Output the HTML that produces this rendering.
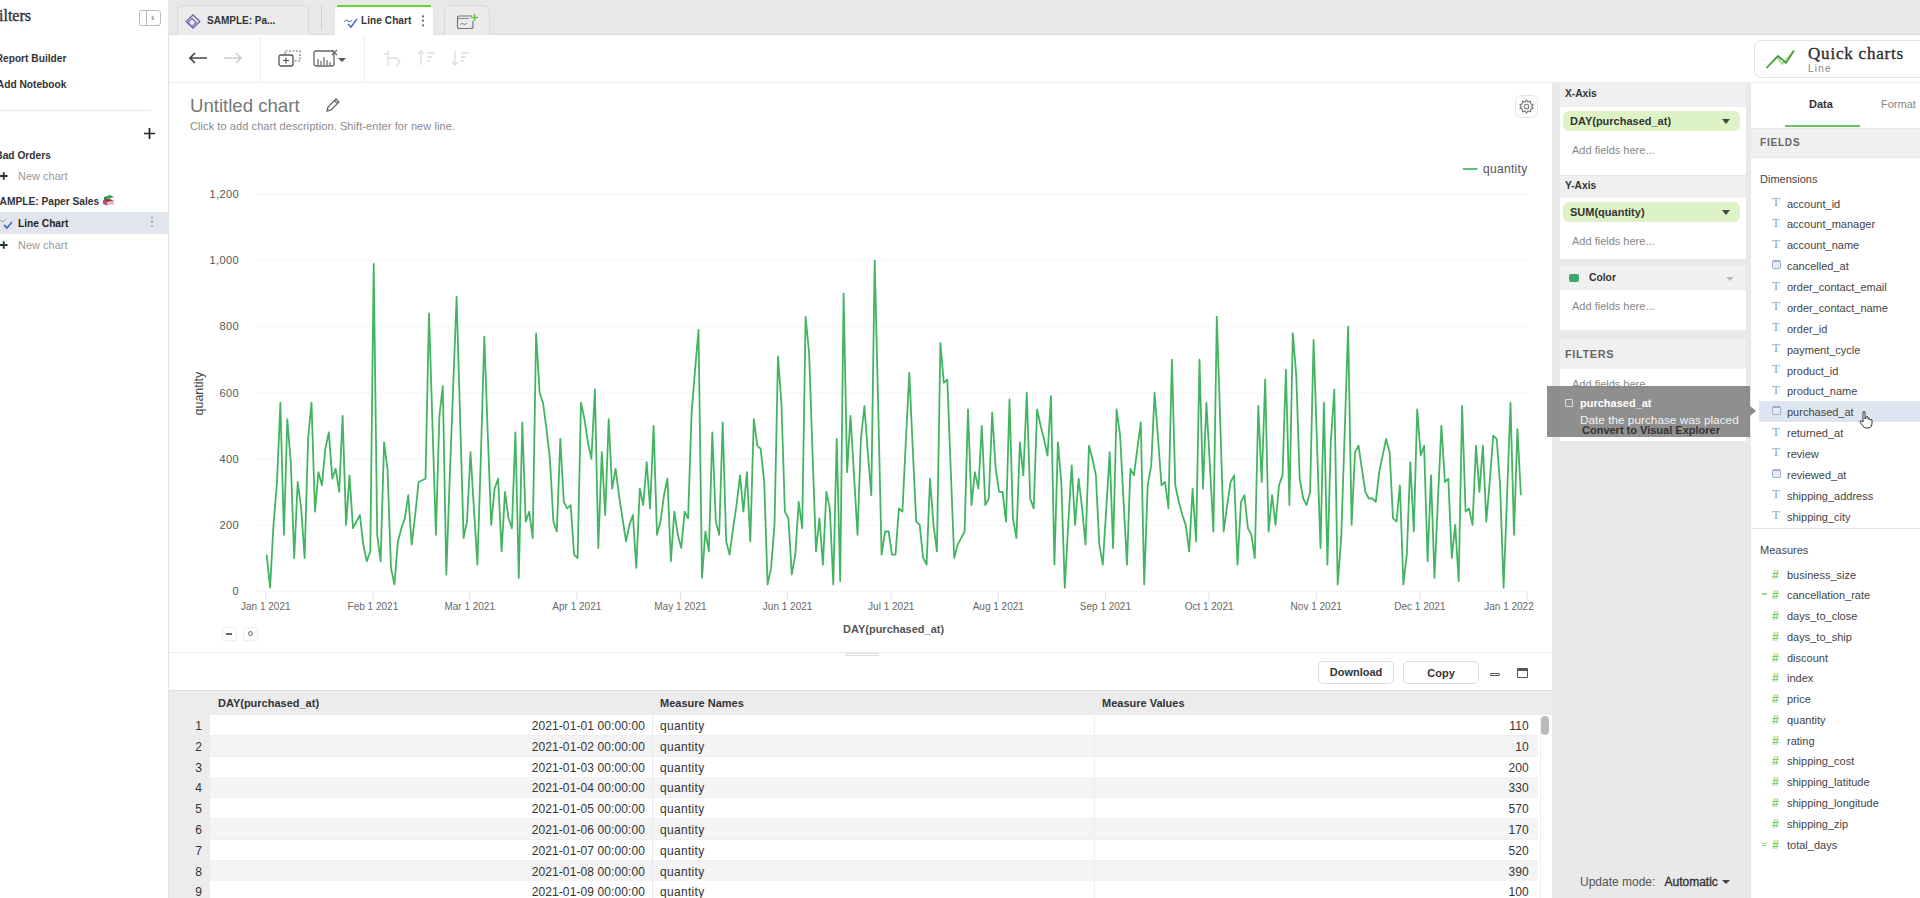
<!DOCTYPE html>
<html><head><meta charset="utf-8">
<style>
*{box-sizing:border-box;margin:0;padding:0}
html,body{width:1920px;height:898px;overflow:hidden;background:#fff;font-family:"Liberation Sans",sans-serif;color:#333}
.a{position:absolute;white-space:nowrap}
.b{font-weight:bold}
</style></head><body>

<div class="a" style="left:168px;top:0;width:1px;height:898px;background:#e4e4e4"></div>
<div class="a" style="right:1889px;top:6.5px;font-family:'Liberation Serif',serif;font-size:16px;color:#333;-webkit-text-stroke:0.4px #333">Filters</div>
<div class="a" style="left:139px;top:10px;width:22px;height:16px;border:1px solid #bbb;border-radius:3px"></div>
<div class="a" style="left:146px;top:10px;width:1px;height:16px;background:#bbb"></div>
<div class="a" style="left:151px;top:11px;font-size:11px;color:#666">&#8249;</div>
<div class="a b" style="right:1853.6px;top:53px;font-size:10.2px;color:#333">Report Builder</div>
<div class="a b" style="right:1853.6px;top:79px;font-size:10.2px;color:#333">Add Notebook</div>
<div class="a" style="left:0;top:110px;width:151px;height:1px;background:#e8e8ef"></div>
<svg class="a" style="left:144px;top:128px" width="11" height="11"><path d="M0 5.5 H11 M5.5 0 V11" stroke="#222" stroke-width="1.7"/></svg>
<div class="a b" style="right:1869.2px;top:149.5px;font-size:10.2px;color:#333">Bad Orders</div>
<svg class="a" style="left:0;top:172px" width="8" height="8"><path d="M0 4 H7.5 M3.75 0.3 V7.7" stroke="#1f3a24" stroke-width="1.8"/></svg>
<div class="a" style="left:18px;top:170px;font-size:11px;color:#999">New chart</div>
<div class="a b" style="right:1820.8px;top:195.5px;font-size:10.2px;color:#333">SAMPLE: Paper Sales</div>
<svg class="a" style="left:102px;top:194px" width="13" height="12"><path d="M1 6 L8 5 L12 7 L5 8 Z" fill="#9a2a3a"/><path d="M1 6 V10 L5 11.5 V8 Z" fill="#c04a5a"/><path d="M5 8 L12 7 V10.5 L5 11.5 Z" fill="#e0c0c8"/><path d="M2 3 L8 1 L12 3 L6 5 Z" fill="#3aa050"/><path d="M2 3 V5.5 L6 7 V5 Z" fill="#2a7040"/></svg>
<div class="a" style="left:0;top:212px;width:168px;height:22px;background:#e1e6ee"></div>
<svg class="a" style="left:0;top:215px" width="16" height="16"><path d="M0 5 L3 7 L6 4" stroke="#999" stroke-width="1" fill="none"/><path d="M4 10 L7 13 L12 7" stroke="#4a6fd0" stroke-width="1.8" fill="none"/></svg>
<div class="a b" style="left:18px;top:217.5px;font-size:10.2px;color:#222">Line Chart</div>
<div class="a" style="left:151px;top:215px;width:2px;height:14px;background:radial-gradient(circle,#777 0.8px,transparent 1px) 0 0/2px 4.5px"></div>
<svg class="a" style="left:0;top:241px" width="8" height="8"><path d="M0 4 H7.5 M3.75 0.3 V7.7" stroke="#1f3a24" stroke-width="1.8"/></svg>
<div class="a" style="left:18px;top:239px;font-size:11px;color:#999">New chart</div>

<div class="a" style="left:169px;top:0;width:1751px;height:35px;background:#e8e8e8;border-bottom:1px solid #dcdcdc"></div>
<div class="a" style="left:177px;top:5px;width:132px;height:30px;background:#ebebec;border:1px solid #d9d9d9;border-bottom:none;border-radius:6px 6px 0 0"></div>
<svg class="a" style="left:185px;top:14px" width="16" height="16"><path d="M8 1 L14.8 7.5 L8 14 L1.2 7.5 Z" stroke="#7a5a9e" stroke-width="1.3" fill="none"/><path d="M7 4.5 L11.2 8.5 L7 12.5 L2.8 8.5 Z" stroke="#6a6ac0" stroke-width="1.2" fill="none"/></svg>
<div class="a b" style="left:207px;top:15px;font-size:10px;color:#333">SAMPLE: Pa...</div>
<div class="a" style="left:321px;top:6px;width:1px;height:24px;background:#cfcfcf"></div>
<div class="a" style="left:335px;top:5px;width:98px;height:31px;background:#fff;border-radius:6px 6px 0 0"></div>
<div class="a" style="left:337px;top:5px;width:94px;height:2px;background:#6ad13a"></div>
<svg class="a" style="left:343px;top:15px" width="16" height="14"><path d="M1 7 Q3 4 5 6 T9 5" stroke="#888" stroke-width="1.2" fill="none"/><path d="M5 9 L8 12 L14 4" stroke="#4a6fd0" stroke-width="1.6" fill="none"/></svg>
<div class="a b" style="left:361px;top:15px;font-size:10px;letter-spacing:0.1px;color:#333">Line Chart</div>
<div class="a" style="left:422px;top:14px;width:2px;height:13px;background:radial-gradient(circle,#444 0.9px,transparent 1.1px) 0 0/2px 4.5px"></div>
<div class="a" style="left:444px;top:5px;width:46px;height:30px;background:#ebebec;border:1px solid #d9d9d9;border-bottom:none;border-radius:6px 6px 0 0"></div>
<svg class="a" style="left:455px;top:12px" width="24" height="18"><path d="M17 4 H4.5 Q2.5 4 2.5 6 V14.5 Q2.5 16.5 4.5 16.5 H16 Q18 16.5 18 14.5 V9" stroke="#777" stroke-width="1.2" fill="none"/><path d="M2.5 6.5 H14" stroke="#888" stroke-width="1"/><path d="M5.5 12.5 Q7 10.5 8.5 12 T12 11" stroke="#888" stroke-width="1" fill="none"/><path d="M19.5 2 V9 M16 5.5 H23" stroke="#6cc840" stroke-width="1.7"/></svg>

<div class="a" style="left:169px;top:82px;width:1751px;height:1px;background:#ececec"></div>
<div class="a" style="left:260px;top:36px;width:1px;height:46px;background:#eee"></div>
<div class="a" style="left:364px;top:36px;width:1px;height:46px;background:#eee"></div>
<svg class="a" style="left:188px;top:51px" width="22" height="14"><path d="M2 7 H19 M7 2 L2 7 L7 12" stroke="#444" stroke-width="1.7" fill="none"/></svg>
<svg class="a" style="left:222px;top:51px" width="22" height="14"><path d="M2 7 H19 M14 2 L19 7 L14 12" stroke="#ccc" stroke-width="1.5" fill="none"/></svg>
<svg class="a" style="left:277px;top:48px" width="26" height="20"><rect x="2" y="7" width="14" height="11" rx="2" stroke="#555" stroke-width="1.3" fill="#fff"/><path d="M9 9.5 V15.5 M6 12.5 H12" stroke="#555" stroke-width="1.2"/><path d="M8 6 V3 H23 V13 H17" stroke="#777" stroke-width="1.2" stroke-dasharray="2 1.5" fill="none"/></svg>
<svg class="a" style="left:312px;top:48px" width="40" height="20"><rect x="2" y="3" width="20" height="15" rx="2" stroke="#666" stroke-width="1.3" fill="none"/><path d="M6 17 V11 M9 17 V13 M12 17 V9 M15 17 V12 M18 17 V14" stroke="#666" stroke-width="1.2"/><path d="M20 2 L25 7 M25 2 L20 7" stroke="#666" stroke-width="1.1"/><path d="M26 10 L34 10 L30 14 Z" fill="#555"/></svg>
<svg class="a" style="left:380px;top:48px" width="24" height="20"><path d="M8 2 V18 M4 6 H8 M8 10 H16 L20 14 L16 18" stroke="#ddd" stroke-width="1.3" fill="none"/></svg>
<svg class="a" style="left:416px;top:49px" width="22" height="18"><path d="M5 2 V16 M2 5 L5 2 L8 5 M11 4 H19 M11 8 H16 M11 12 H14" stroke="#ddd" stroke-width="1.3" fill="none"/></svg>
<svg class="a" style="left:450px;top:49px" width="22" height="18"><path d="M5 2 V16 M2 13 L5 16 L8 13 M11 4 H19 M11 8 H16 M11 12 H14" stroke="#ddd" stroke-width="1.3" fill="none"/></svg>

<div class="a" style="left:190px;top:95px;font-size:18.6px;color:#777">Untitled chart</div>
<svg class="a" style="left:325px;top:97px" width="16" height="16"><path d="M2 14 L3 10 L11 2 L14 5 L6 13 Z M9.5 3.5 L12.5 6.5" stroke="#666" stroke-width="1.3" fill="none"/></svg>
<div class="a" style="left:190px;top:120px;font-size:11px;letter-spacing:0.08px;color:#8a8a8a">Click to add chart description. Shift-enter for new line.</div>
<div class="a" style="left:1515px;top:95px;width:23px;height:23px;border:1px solid #e4e4e4;border-radius:6px"></div>
<svg class="a" style="left:1518px;top:98px" width="17" height="17"><g fill="none" stroke="#777" stroke-width="1.1"><circle cx="8.5" cy="8.5" r="2.3"/><path d="M8.5 2 L10 4 L12.5 3.3 L12.8 5.8 L15 7 L13.6 8.5 L15 10 L12.8 11.2 L12.5 13.7 L10 13 L8.5 15 L7 13 L4.5 13.7 L4.2 11.2 L2 10 L3.4 8.5 L2 7 L4.2 5.8 L4.5 3.3 L7 4 Z"/></g></svg>

<svg class="a" style="left:0;top:0" width="1552" height="660">
<line x1="256" y1="591.7" x2="1528" y2="591.7" stroke="#e6e6ee" stroke-width="1" stroke-dasharray="1.5 2.5"/>
<text x="239" y="595.2" text-anchor="end" font-size="11" letter-spacing="0.4" fill="#555" font-family="Liberation Sans">0</text>
<line x1="256" y1="525.5" x2="1528" y2="525.5" stroke="#e6e6ee" stroke-width="1" stroke-dasharray="1.5 2.5"/>
<text x="239" y="529.0" text-anchor="end" font-size="11" letter-spacing="0.4" fill="#555" font-family="Liberation Sans">200</text>
<line x1="256" y1="459.2" x2="1528" y2="459.2" stroke="#e6e6ee" stroke-width="1" stroke-dasharray="1.5 2.5"/>
<text x="239" y="462.7" text-anchor="end" font-size="11" letter-spacing="0.4" fill="#555" font-family="Liberation Sans">400</text>
<line x1="256" y1="393.0" x2="1528" y2="393.0" stroke="#e6e6ee" stroke-width="1" stroke-dasharray="1.5 2.5"/>
<text x="239" y="396.5" text-anchor="end" font-size="11" letter-spacing="0.4" fill="#555" font-family="Liberation Sans">600</text>
<line x1="256" y1="326.7" x2="1528" y2="326.7" stroke="#e6e6ee" stroke-width="1" stroke-dasharray="1.5 2.5"/>
<text x="239" y="330.2" text-anchor="end" font-size="11" letter-spacing="0.4" fill="#555" font-family="Liberation Sans">800</text>
<line x1="256" y1="260.5" x2="1528" y2="260.5" stroke="#e6e6ee" stroke-width="1" stroke-dasharray="1.5 2.5"/>
<text x="239" y="264.0" text-anchor="end" font-size="11" letter-spacing="0.4" fill="#555" font-family="Liberation Sans">1,000</text>
<line x1="256" y1="194.3" x2="1528" y2="194.3" stroke="#e6e6ee" stroke-width="1" stroke-dasharray="1.5 2.5"/>
<text x="239" y="197.8" text-anchor="end" font-size="11" letter-spacing="0.4" fill="#555" font-family="Liberation Sans">1,200</text>
<line x1="265.8" y1="592" x2="265.8" y2="600" stroke="#e4e4ea" stroke-width="1"/>
<text x="265.8" y="609.5" text-anchor="middle" font-size="10" fill="#666" font-family="Liberation Sans">Jan 1 2021</text>
<line x1="372.9" y1="592" x2="372.9" y2="600" stroke="#e4e4ea" stroke-width="1"/>
<text x="372.9" y="609.5" text-anchor="middle" font-size="10" fill="#666" font-family="Liberation Sans">Feb 1 2021</text>
<line x1="469.7" y1="592" x2="469.7" y2="600" stroke="#e4e4ea" stroke-width="1"/>
<text x="469.7" y="609.5" text-anchor="middle" font-size="10" fill="#666" font-family="Liberation Sans">Mar 1 2021</text>
<line x1="576.8" y1="592" x2="576.8" y2="600" stroke="#e4e4ea" stroke-width="1"/>
<text x="576.8" y="609.5" text-anchor="middle" font-size="10" fill="#666" font-family="Liberation Sans">Apr 1 2021</text>
<line x1="680.4" y1="592" x2="680.4" y2="600" stroke="#e4e4ea" stroke-width="1"/>
<text x="680.4" y="609.5" text-anchor="middle" font-size="10" fill="#666" font-family="Liberation Sans">May 1 2021</text>
<line x1="787.6" y1="592" x2="787.6" y2="600" stroke="#e4e4ea" stroke-width="1"/>
<text x="787.6" y="609.5" text-anchor="middle" font-size="10" fill="#666" font-family="Liberation Sans">Jun 1 2021</text>
<line x1="891.2" y1="592" x2="891.2" y2="600" stroke="#e4e4ea" stroke-width="1"/>
<text x="891.2" y="609.5" text-anchor="middle" font-size="10" fill="#666" font-family="Liberation Sans">Jul 1 2021</text>
<line x1="998.3" y1="592" x2="998.3" y2="600" stroke="#e4e4ea" stroke-width="1"/>
<text x="998.3" y="609.5" text-anchor="middle" font-size="10" fill="#666" font-family="Liberation Sans">Aug 1 2021</text>
<line x1="1105.4" y1="592" x2="1105.4" y2="600" stroke="#e4e4ea" stroke-width="1"/>
<text x="1105.4" y="609.5" text-anchor="middle" font-size="10" fill="#666" font-family="Liberation Sans">Sep 1 2021</text>
<line x1="1209.1" y1="592" x2="1209.1" y2="600" stroke="#e4e4ea" stroke-width="1"/>
<text x="1209.1" y="609.5" text-anchor="middle" font-size="10" fill="#666" font-family="Liberation Sans">Oct 1 2021</text>
<line x1="1316.2" y1="592" x2="1316.2" y2="600" stroke="#e4e4ea" stroke-width="1"/>
<text x="1316.2" y="609.5" text-anchor="middle" font-size="10" fill="#666" font-family="Liberation Sans">Nov 1 2021</text>
<line x1="1419.9" y1="592" x2="1419.9" y2="600" stroke="#e4e4ea" stroke-width="1"/>
<text x="1419.9" y="609.5" text-anchor="middle" font-size="10" fill="#666" font-family="Liberation Sans">Dec 1 2021</text>
<line x1="1527.0" y1="592" x2="1527.0" y2="600" stroke="#e4e4ea" stroke-width="1"/>
<text x="1509.0" y="609.5" text-anchor="middle" font-size="10" fill="#666" font-family="Liberation Sans">Jan 1 2022</text>
<text x="893.6" y="632.5" text-anchor="middle" font-size="11" font-weight="bold" fill="#555" font-family="Liberation Sans">DAY(purchased_at)</text>
<text transform="translate(203,393.6) rotate(-90)" text-anchor="middle" font-size="12.5" fill="#444" font-family="Liberation Sans">quantity</text>
<path d="M266.6,554.7 L270.1,587.7 L273.5,524.9 L277.0,482.0 L280.4,402.7 L283.9,534.8 L287.3,419.2 L290.8,462.1 L294.2,558.0 L297.7,482.0 L301.2,508.4 L304.6,558.0 L308.1,439.0 L311.5,402.7 L315.0,511.7 L318.4,472.1 L321.9,485.3 L325.3,448.9 L328.8,432.4 L332.3,478.7 L335.7,468.8 L339.2,491.9 L342.6,415.9 L346.1,524.9 L349.5,475.4 L353.0,528.2 L356.4,521.6 L359.9,515.0 L363.3,544.7 L366.8,561.3 L370.3,551.4 L373.7,263.9 L377.2,534.8 L380.6,561.3 L384.1,442.3 L387.5,468.8 L391.0,567.9 L394.4,584.4 L397.9,541.4 L401.4,528.2 L404.8,518.3 L408.3,495.2 L411.7,544.7 L415.2,515.0 L418.6,482.0 L422.1,480.3 L425.5,478.7 L429.0,313.5 L432.5,425.8 L435.9,534.8 L439.4,415.9 L442.8,386.2 L446.3,574.5 L449.7,478.7 L453.2,386.2 L456.6,296.9 L460.1,417.5 L463.6,538.1 L467.0,521.6 L470.5,452.2 L473.9,508.4 L477.4,564.6 L480.8,458.8 L484.3,336.6 L487.7,432.4 L491.2,524.9 L494.6,488.6 L498.1,478.7 L501.6,551.4 L505.0,491.9 L508.5,518.3 L511.9,528.2 L515.4,432.4 L518.8,577.8 L522.3,422.5 L525.7,521.6 L529.2,511.7 L532.7,538.1 L536.1,333.3 L539.6,392.8 L543.0,402.7 L546.5,429.1 L549.9,458.8 L553.4,521.6 L556.8,531.5 L560.3,439.0 L563.8,501.8 L567.2,508.4 L570.7,505.1 L574.1,554.7 L577.6,558.0 L581.0,402.7 L584.5,419.2 L587.9,442.3 L591.4,458.8 L594.9,389.5 L598.3,548.0 L601.8,452.2 L605.2,515.0 L608.7,419.2 L612.1,488.6 L615.6,468.8 L619.0,495.2 L622.5,518.3 L626.0,541.4 L629.4,524.9 L632.9,515.0 L636.3,567.9 L639.8,488.6 L643.2,505.1 L646.7,462.1 L650.1,508.4 L653.6,425.8 L657.0,534.8 L660.5,521.6 L664.0,495.2 L667.4,478.7 L670.9,561.3 L674.3,511.7 L677.8,534.8 L681.2,548.0 L684.7,511.7 L688.1,518.3 L691.6,412.6 L695.1,369.6 L698.5,330.0 L702.0,577.8 L705.4,531.5 L708.9,551.4 L712.3,432.4 L715.8,521.6 L719.2,534.8 L722.7,422.5 L726.2,541.4 L729.6,554.7 L733.1,528.2 L736.5,505.1 L740.0,475.4 L743.4,511.7 L746.9,472.1 L750.3,541.4 L753.8,419.2 L757.3,445.6 L760.7,448.9 L764.2,482.0 L767.6,584.4 L771.1,567.9 L774.5,524.9 L778.0,356.4 L781.4,402.7 L784.9,511.7 L788.4,518.3 L791.8,574.5 L795.3,554.7 L798.7,501.8 L802.2,528.2 L805.6,316.8 L809.1,353.1 L812.5,452.2 L816.0,551.4 L819.4,518.3 L822.9,564.6 L826.4,491.9 L829.8,508.4 L833.3,584.4 L836.7,439.0 L840.2,581.1 L843.6,293.6 L847.1,472.1 L850.5,415.9 L854.0,475.4 L857.5,534.8 L860.9,439.0 L864.4,406.0 L867.8,452.2 L871.3,495.2 L874.7,260.6 L878.2,407.6 L881.6,554.7 L885.1,531.5 L888.6,531.5 L892.0,554.7 L895.5,554.7 L898.9,508.4 L902.4,511.7 L905.8,442.3 L909.3,372.9 L912.7,447.3 L916.2,521.6 L919.7,524.9 L923.1,558.0 L926.6,564.6 L930.0,478.7 L933.5,524.9 L936.9,551.4 L940.4,343.2 L943.8,382.8 L947.3,379.5 L950.7,468.8 L954.2,558.0 L957.7,544.7 L961.1,538.1 L964.6,531.5 L968.0,409.3 L971.5,505.1 L974.9,472.1 L978.4,488.6 L981.8,425.8 L985.3,505.1 L988.8,498.5 L992.2,412.6 L995.7,468.8 L999.1,491.9 L1002.6,491.9 L1006.0,521.6 L1009.5,399.4 L1012.9,518.3 L1016.4,538.1 L1019.9,442.3 L1023.3,475.4 L1026.8,392.8 L1030.2,498.5 L1033.7,508.4 L1037.1,409.3 L1040.6,425.8 L1044.0,439.0 L1047.5,455.5 L1051.0,396.1 L1054.4,564.6 L1057.9,442.3 L1061.3,482.0 L1064.8,587.7 L1068.2,524.9 L1071.7,465.4 L1075.1,524.9 L1078.6,478.7 L1082.1,508.4 L1085.5,544.7 L1089.0,445.6 L1092.4,458.8 L1095.9,475.4 L1099.3,544.7 L1102.8,564.6 L1106.2,510.1 L1109.7,452.2 L1113.1,548.0 L1116.6,409.3 L1120.1,435.7 L1123.5,500.1 L1127.0,564.6 L1130.4,468.8 L1133.9,475.4 L1137.3,448.9 L1140.8,422.5 L1144.2,584.4 L1147.7,485.3 L1151.2,465.4 L1154.6,392.8 L1158.1,439.0 L1161.5,485.3 L1165.0,482.0 L1168.4,508.4 L1171.9,359.7 L1175.3,485.3 L1178.8,501.8 L1182.3,515.0 L1185.7,524.9 L1189.2,551.4 L1192.6,488.6 L1196.1,541.4 L1199.5,359.7 L1203.0,488.6 L1206.4,402.7 L1209.9,465.4 L1213.4,531.5 L1216.8,316.8 L1220.3,424.1 L1223.7,531.5 L1227.2,505.1 L1230.6,482.0 L1234.1,475.4 L1237.5,564.6 L1241.0,501.8 L1244.4,495.2 L1247.9,528.2 L1251.4,534.8 L1254.8,558.0 L1258.3,406.0 L1261.7,482.0 L1265.2,379.5 L1268.6,531.5 L1272.1,495.2 L1275.5,524.9 L1279.0,485.3 L1282.5,475.4 L1285.9,369.6 L1289.4,505.1 L1292.8,333.3 L1296.3,376.2 L1299.7,478.7 L1303.2,498.5 L1306.6,505.1 L1310.1,491.9 L1313.6,339.9 L1317.0,444.0 L1320.5,548.0 L1323.9,402.7 L1327.4,564.6 L1330.8,442.3 L1334.3,389.5 L1337.7,584.4 L1341.2,538.1 L1344.7,432.4 L1348.1,326.7 L1351.6,524.9 L1355.0,452.2 L1358.5,445.6 L1361.9,468.8 L1365.4,491.9 L1368.8,498.5 L1372.3,498.5 L1375.8,501.8 L1379.2,472.1 L1382.7,455.5 L1386.1,439.0 L1389.6,452.2 L1393.0,518.3 L1396.5,521.6 L1399.9,485.3 L1403.4,584.4 L1406.8,554.7 L1410.3,462.1 L1413.8,531.5 L1417.2,409.3 L1420.7,455.5 L1424.1,445.6 L1427.6,561.3 L1431.0,475.4 L1434.5,577.8 L1437.9,500.1 L1441.4,425.8 L1444.9,482.0 L1448.3,478.7 L1451.8,558.0 L1455.2,524.9 L1458.7,581.1 L1462.1,406.0 L1465.6,511.7 L1469.0,508.4 L1472.5,524.9 L1476.0,445.6 L1479.4,491.9 L1482.9,445.6 L1486.3,521.6 L1489.8,481.0 L1493.2,435.7 L1496.7,439.0 L1500.1,485.3 L1503.6,587.7 L1507.1,495.2 L1510.5,402.7 L1514.0,534.8 L1517.4,429.1 L1520.9,495.2" stroke="#43b562" stroke-width="1.8" fill="none" stroke-linejoin="round"/>
<line x1="1463" y1="169" x2="1477.5" y2="169" stroke="#5cc27a" stroke-width="2"/>
<text x="1483" y="173" font-size="12" letter-spacing="0.3" fill="#555" font-family="Liberation Sans">quantity</text>
</svg>
<div class="a" style="left:222px;top:627px;width:15px;height:14px;border:1px solid #eee;border-radius:2px"></div>
<div class="a" style="left:226px;top:633px;width:6px;height:2px;background:#666"></div>
<div class="a" style="left:243px;top:627px;width:15px;height:14px;border:1px solid #eee;border-radius:2px"></div>
<div class="a" style="left:248px;top:631px;width:5px;height:5px;border:1.3px solid #666;border-radius:50%"></div>
<div class="a" style="left:169px;top:652px;width:1383px;height:1px;background:#eee"></div>
<div class="a" style="left:845px;top:653px;width:34px;height:3px;border-top:1px solid #ddd;border-bottom:1px solid #ddd"></div>

<div class="a b" style="left:1318px;top:661px;width:76px;height:23px;border:1px solid #ddd;border-radius:5px;font-size:11px;line-height:21px;text-align:center;color:#333">Download</div>
<div class="a b" style="left:1403px;top:661px;width:76px;height:23px;border:1px solid #ddd;border-radius:5px;font-size:11px;line-height:23px;text-align:center;color:#333">Copy</div>
<div class="a" style="left:1490px;top:673px;width:10px;height:3px;border:1px solid #555;border-radius:1px"></div>
<div class="a" style="left:1517px;top:668px;width:11px;height:10px;border:1.3px solid #555;border-top-width:3px;border-radius:1px"></div>
<div class="a" style="left:169px;top:690px;width:1383px;height:25px;background:#ececec;border-top:1px solid #e0e0e0"></div>
<div class="a" style="left:169px;top:715px;width:41px;height:183px;background:#ececec"></div>
<div class="a b" style="left:218px;top:697px;font-size:11px;color:#333">DAY(purchased_at)</div>
<div class="a b" style="left:660px;top:697px;font-size:11px;color:#333">Measure Names</div>
<div class="a b" style="left:1102px;top:697px;font-size:11px;color:#333">Measure Values</div>

<div class="a" style="left:210px;top:715.0px;width:1328px;height:21px;background:#fff;border-bottom:1px solid #eee"></div>
<div class="a" style="left:170px;top:719.0px;width:32px;text-align:right;font-size:12px;color:#333">1</div>
<div class="a" style="right:1275px;top:719.0px;font-size:12px;letter-spacing:0.1px;color:#333">2021-01-01 00:00:00</div>
<div class="a" style="left:660px;top:719.0px;font-size:12px;letter-spacing:0.3px;color:#333">quantity</div>
<div class="a" style="right:391px;top:719.0px;font-size:12px;letter-spacing:0.2px;color:#333">110</div>
<div class="a" style="left:210px;top:735.8px;width:1328px;height:21px;background:#f4f4f4;border-bottom:1px solid #eee"></div>
<div class="a" style="left:170px;top:739.8px;width:32px;text-align:right;font-size:12px;color:#333">2</div>
<div class="a" style="right:1275px;top:739.8px;font-size:12px;letter-spacing:0.1px;color:#333">2021-01-02 00:00:00</div>
<div class="a" style="left:660px;top:739.8px;font-size:12px;letter-spacing:0.3px;color:#333">quantity</div>
<div class="a" style="right:391px;top:739.8px;font-size:12px;letter-spacing:0.2px;color:#333">10</div>
<div class="a" style="left:210px;top:756.6px;width:1328px;height:21px;background:#fff;border-bottom:1px solid #eee"></div>
<div class="a" style="left:170px;top:760.6px;width:32px;text-align:right;font-size:12px;color:#333">3</div>
<div class="a" style="right:1275px;top:760.6px;font-size:12px;letter-spacing:0.1px;color:#333">2021-01-03 00:00:00</div>
<div class="a" style="left:660px;top:760.6px;font-size:12px;letter-spacing:0.3px;color:#333">quantity</div>
<div class="a" style="right:391px;top:760.6px;font-size:12px;letter-spacing:0.2px;color:#333">200</div>
<div class="a" style="left:210px;top:777.4px;width:1328px;height:21px;background:#f4f4f4;border-bottom:1px solid #eee"></div>
<div class="a" style="left:170px;top:781.4px;width:32px;text-align:right;font-size:12px;color:#333">4</div>
<div class="a" style="right:1275px;top:781.4px;font-size:12px;letter-spacing:0.1px;color:#333">2021-01-04 00:00:00</div>
<div class="a" style="left:660px;top:781.4px;font-size:12px;letter-spacing:0.3px;color:#333">quantity</div>
<div class="a" style="right:391px;top:781.4px;font-size:12px;letter-spacing:0.2px;color:#333">330</div>
<div class="a" style="left:210px;top:798.2px;width:1328px;height:21px;background:#fff;border-bottom:1px solid #eee"></div>
<div class="a" style="left:170px;top:802.2px;width:32px;text-align:right;font-size:12px;color:#333">5</div>
<div class="a" style="right:1275px;top:802.2px;font-size:12px;letter-spacing:0.1px;color:#333">2021-01-05 00:00:00</div>
<div class="a" style="left:660px;top:802.2px;font-size:12px;letter-spacing:0.3px;color:#333">quantity</div>
<div class="a" style="right:391px;top:802.2px;font-size:12px;letter-spacing:0.2px;color:#333">570</div>
<div class="a" style="left:210px;top:819.0px;width:1328px;height:21px;background:#f4f4f4;border-bottom:1px solid #eee"></div>
<div class="a" style="left:170px;top:823.0px;width:32px;text-align:right;font-size:12px;color:#333">6</div>
<div class="a" style="right:1275px;top:823.0px;font-size:12px;letter-spacing:0.1px;color:#333">2021-01-06 00:00:00</div>
<div class="a" style="left:660px;top:823.0px;font-size:12px;letter-spacing:0.3px;color:#333">quantity</div>
<div class="a" style="right:391px;top:823.0px;font-size:12px;letter-spacing:0.2px;color:#333">170</div>
<div class="a" style="left:210px;top:839.8px;width:1328px;height:21px;background:#fff;border-bottom:1px solid #eee"></div>
<div class="a" style="left:170px;top:843.8px;width:32px;text-align:right;font-size:12px;color:#333">7</div>
<div class="a" style="right:1275px;top:843.8px;font-size:12px;letter-spacing:0.1px;color:#333">2021-01-07 00:00:00</div>
<div class="a" style="left:660px;top:843.8px;font-size:12px;letter-spacing:0.3px;color:#333">quantity</div>
<div class="a" style="right:391px;top:843.8px;font-size:12px;letter-spacing:0.2px;color:#333">520</div>
<div class="a" style="left:210px;top:860.6px;width:1328px;height:21px;background:#f4f4f4;border-bottom:1px solid #eee"></div>
<div class="a" style="left:170px;top:864.6px;width:32px;text-align:right;font-size:12px;color:#333">8</div>
<div class="a" style="right:1275px;top:864.6px;font-size:12px;letter-spacing:0.1px;color:#333">2021-01-08 00:00:00</div>
<div class="a" style="left:660px;top:864.6px;font-size:12px;letter-spacing:0.3px;color:#333">quantity</div>
<div class="a" style="right:391px;top:864.6px;font-size:12px;letter-spacing:0.2px;color:#333">390</div>
<div class="a" style="left:210px;top:881.4px;width:1328px;height:21px;background:#fff;border-bottom:1px solid #eee"></div>
<div class="a" style="left:170px;top:885.4px;width:32px;text-align:right;font-size:12px;color:#333">9</div>
<div class="a" style="right:1275px;top:885.4px;font-size:12px;letter-spacing:0.1px;color:#333">2021-01-09 00:00:00</div>
<div class="a" style="left:660px;top:885.4px;font-size:12px;letter-spacing:0.3px;color:#333">quantity</div>
<div class="a" style="right:391px;top:885.4px;font-size:12px;letter-spacing:0.2px;color:#333">100</div>
<div class="a" style="left:652px;top:715px;width:1px;height:183px;background:#e8e8f0"></div>
<div class="a" style="left:1094px;top:715px;width:1px;height:183px;background:#eee"></div>
<div class="a" style="left:1540px;top:715px;width:1px;height:183px;background:#eee"></div>
<div class="a" style="left:1541px;top:716px;width:8px;height:19px;background:#bbb;border-radius:4px"></div>

<div class="a" style="left:1552px;top:83px;width:199px;height:815px;background:#e9e9e9"></div>
<div class="a" style="left:1560px;top:83px;width:186px;height:176px;background:#fff"></div>
<div class="a" style="left:1560px;top:83px;width:186px;height:24px;background:#f0f0f0"></div>
<div class="a b" style="left:1565px;top:88px;font-size:10.2px;color:#333">X-Axis</div>
<div class="a b" style="left:1563px;top:111px;width:177px;height:20px;background:#ddf3c6;border-radius:6px;font-size:11px;line-height:20px;padding-left:7px;color:#333">DAY(purchased_at)</div>
<div class="a" style="left:1722px;top:119px;width:0;height:0;border-left:4px solid transparent;border-right:4px solid transparent;border-top:5px solid #444"></div>
<div class="a" style="left:1572px;top:144px;font-size:11px;color:#888">Add fields here...</div>
<div class="a" style="left:1560px;top:175px;width:186px;height:23px;background:#f0f0f0;border-top:1px solid #e6e6e6"></div>
<div class="a b" style="left:1565px;top:180px;font-size:10.2px;color:#333">Y-Axis</div>
<div class="a b" style="left:1563px;top:202px;width:177px;height:20px;background:#ddf3c6;border-radius:6px;font-size:11px;line-height:20px;padding-left:7px;color:#333">SUM(quantity)</div>
<div class="a" style="left:1722px;top:210px;width:0;height:0;border-left:4px solid transparent;border-right:4px solid transparent;border-top:5px solid #444"></div>
<div class="a" style="left:1572px;top:235px;font-size:11px;color:#888">Add fields here...</div>
<div class="a" style="left:1560px;top:266px;width:186px;height:64px;background:#fff"></div>
<div class="a" style="left:1560px;top:266px;width:186px;height:24px;background:#f0f0f0"></div>
<div class="a" style="left:1569px;top:274px;width:10px;height:8px;background:#3ea86a;border-radius:2px"></div>
<div class="a b" style="left:1589px;top:272px;font-size:10.3px;color:#333">Color</div>
<div class="a" style="left:1726px;top:277px;width:0;height:0;border-left:4px solid transparent;border-right:4px solid transparent;border-top:4px solid #bbb"></div>
<div class="a" style="left:1572px;top:300px;font-size:11px;color:#888">Add fields here...</div>
<div class="a" style="left:1560px;top:339px;width:186px;height:102px;background:#fff"></div>
<div class="a" style="left:1560px;top:339px;width:186px;height:30px;background:#f0f0f0"></div>
<div class="a b" style="left:1565px;top:348px;font-size:11px;letter-spacing:0.6px;color:#666">FILTERS</div>
<div class="a" style="left:1572px;top:378px;font-size:11px;color:#888">Add fields here...</div>
<div class="a" style="left:1547px;top:386px;width:203px;height:51px;background:rgba(128,128,128,0.88)"></div>
<div class="a" style="left:1750px;top:406px;width:0;height:0;border-top:5px solid transparent;border-bottom:5px solid transparent;border-left:6px solid #8c8c8c"></div>
<div class="a" style="left:1565px;top:399px;width:8px;height:8px;border:1px solid #ddd;border-radius:1px"></div>
<div class="a b" style="left:1580px;top:397px;font-size:11px;color:#fff">purchased_at</div>
<div class="a" style="left:1580px;top:412.5px;font-size:11.8px;color:#f2f2f2">Date the purchase was placed</div>
<div class="a b" style="left:1582px;top:424px;font-size:11px;color:#333">Convert to Visual Explorer</div>
<div class="a" style="left:1580px;top:874.5px;font-size:12px;color:#555">Update mode:</div>
<div class="a" style="left:1664.5px;top:874.5px;font-size:12px;color:#333;-webkit-text-stroke:0.35px #333">Automatic</div>
<div class="a" style="left:1722px;top:880px;width:0;height:0;border-left:4px solid transparent;border-right:4px solid transparent;border-top:4px solid #444"></div>

<div class="a" style="left:1754px;top:40px;width:180px;height:38px;border:1px solid #e2e2e2;border-radius:8px;background:#fff"></div>
<svg class="a" style="left:1764px;top:48px" width="32" height="22"><path d="M7 15 L13 9 L18 16 L29 4" stroke="#9ede7a" stroke-width="1.5" fill="none"/><path d="M2.5 20 L14 8 L22 15 L30 2.5" stroke="#4a9a40" stroke-width="1.8" fill="none"/></svg>
<div class="a" style="left:1808px;top:44px;font-family:'Liberation Serif',serif;font-size:17px;color:#2a2a2a;letter-spacing:0.8px;-webkit-text-stroke:0.3px #2a2a2a">Quick charts</div>
<div class="a" style="left:1808px;top:62.7px;font-size:10px;color:#888;letter-spacing:1.2px">Line</div>
<div class="a b" style="left:1809px;top:98px;font-size:11px;color:#333">Data</div>
<div class="a" style="left:1881px;top:98px;font-size:11px;color:#888">Format</div>
<div class="a" style="left:1785px;top:125px;width:75px;height:2px;background:#66c36a"></div>
<div class="a" style="left:1751px;top:128px;width:169px;height:30px;background:#f0f0f0;border-top:1px solid #e6e6e6;border-bottom:1px solid #e6e6e6"></div>
<div class="a b" style="left:1760px;top:137px;font-size:10px;letter-spacing:0.8px;color:#666">FIELDS</div>
<div class="a" style="left:1760px;top:173px;font-size:11px;color:#444">Dimensions</div>
<div class="a" style="left:1759px;top:400.5px;width:161px;height:21.5px;background:#dde5f0"></div>

<div class="a" style="left:1772px;top:194.0px;font-family:'Liberation Serif',serif;font-size:13px;color:#8aa8c0">T</div>
<div class="a" style="left:1787px;top:197.5px;font-size:11px;color:#444">account_id</div>
<div class="a" style="left:1772px;top:214.9px;font-family:'Liberation Serif',serif;font-size:13px;color:#8aa8c0">T</div>
<div class="a" style="left:1787px;top:218.4px;font-size:11px;color:#444">account_manager</div>
<div class="a" style="left:1772px;top:235.7px;font-family:'Liberation Serif',serif;font-size:13px;color:#8aa8c0">T</div>
<div class="a" style="left:1787px;top:239.2px;font-size:11px;color:#444">account_name</div>
<div class="a" style="left:1772px;top:260.1px;width:9px;height:9px;border:1px solid #9fb0cc;border-top-width:2px;border-radius:2px;background:#e4eaf6"></div>
<div class="a" style="left:1787px;top:260.1px;font-size:11px;color:#444">cancelled_at</div>
<div class="a" style="left:1772px;top:277.5px;font-family:'Liberation Serif',serif;font-size:13px;color:#8aa8c0">T</div>
<div class="a" style="left:1787px;top:281.0px;font-size:11px;color:#444">order_contact_email</div>
<div class="a" style="left:1772px;top:298.4px;font-family:'Liberation Serif',serif;font-size:13px;color:#8aa8c0">T</div>
<div class="a" style="left:1787px;top:301.9px;font-size:11px;color:#444">order_contact_name</div>
<div class="a" style="left:1772px;top:319.2px;font-family:'Liberation Serif',serif;font-size:13px;color:#8aa8c0">T</div>
<div class="a" style="left:1787px;top:322.7px;font-size:11px;color:#444">order_id</div>
<div class="a" style="left:1772px;top:340.1px;font-family:'Liberation Serif',serif;font-size:13px;color:#8aa8c0">T</div>
<div class="a" style="left:1787px;top:343.6px;font-size:11px;color:#444">payment_cycle</div>
<div class="a" style="left:1772px;top:361.0px;font-family:'Liberation Serif',serif;font-size:13px;color:#8aa8c0">T</div>
<div class="a" style="left:1787px;top:364.5px;font-size:11px;color:#444">product_id</div>
<div class="a" style="left:1772px;top:381.8px;font-family:'Liberation Serif',serif;font-size:13px;color:#8aa8c0">T</div>
<div class="a" style="left:1787px;top:385.3px;font-size:11px;color:#444">product_name</div>
<div class="a" style="left:1772px;top:406.2px;width:9px;height:9px;border:1px solid #9fb0cc;border-top-width:2px;border-radius:2px;background:#e4eaf6"></div>
<div class="a" style="left:1787px;top:406.2px;font-size:11px;color:#444">purchased_at</div>
<div class="a" style="left:1772px;top:423.6px;font-family:'Liberation Serif',serif;font-size:13px;color:#8aa8c0">T</div>
<div class="a" style="left:1787px;top:427.1px;font-size:11px;color:#444">returned_at</div>
<div class="a" style="left:1772px;top:444.4px;font-family:'Liberation Serif',serif;font-size:13px;color:#8aa8c0">T</div>
<div class="a" style="left:1787px;top:447.9px;font-size:11px;color:#444">review</div>
<div class="a" style="left:1772px;top:468.8px;width:9px;height:9px;border:1px solid #9fb0cc;border-top-width:2px;border-radius:2px;background:#e4eaf6"></div>
<div class="a" style="left:1787px;top:468.8px;font-size:11px;color:#444">reviewed_at</div>
<div class="a" style="left:1772px;top:486.2px;font-family:'Liberation Serif',serif;font-size:13px;color:#8aa8c0">T</div>
<div class="a" style="left:1787px;top:489.7px;font-size:11px;color:#444">shipping_address</div>
<div class="a" style="left:1772px;top:507.0px;font-family:'Liberation Serif',serif;font-size:13px;color:#8aa8c0">T</div>
<div class="a" style="left:1787px;top:510.5px;font-size:11px;color:#444">shipping_city</div>
<div class="a" style="left:1751px;top:528px;width:169px;height:1px;background:#e2e2e2"></div>
<div class="a" style="left:1760px;top:544px;font-size:11px;color:#444">Measures</div>
<div class="a b" style="left:1772px;top:567.5px;font-size:12px;color:#7ccf5a">#</div>
<div class="a" style="left:1787px;top:568.5px;font-size:11px;color:#444">business_size</div>
<div class="a b" style="left:1772px;top:588.3px;font-size:12px;color:#7ccf5a">#</div>
<div class="a" style="left:1787px;top:589.3px;font-size:11px;color:#444">cancellation_rate</div>
<div class="a b" style="left:1772px;top:609.0px;font-size:12px;color:#7ccf5a">#</div>
<div class="a" style="left:1787px;top:610.0px;font-size:11px;color:#444">days_to_close</div>
<div class="a b" style="left:1772px;top:629.8px;font-size:12px;color:#7ccf5a">#</div>
<div class="a" style="left:1787px;top:630.8px;font-size:11px;color:#444">days_to_ship</div>
<div class="a b" style="left:1772px;top:650.6px;font-size:12px;color:#7ccf5a">#</div>
<div class="a" style="left:1787px;top:651.6px;font-size:11px;color:#444">discount</div>
<div class="a b" style="left:1772px;top:671.4px;font-size:12px;color:#7ccf5a">#</div>
<div class="a" style="left:1787px;top:672.4px;font-size:11px;color:#444">index</div>
<div class="a b" style="left:1772px;top:692.1px;font-size:12px;color:#7ccf5a">#</div>
<div class="a" style="left:1787px;top:693.1px;font-size:11px;color:#444">price</div>
<div class="a b" style="left:1772px;top:712.9px;font-size:12px;color:#7ccf5a">#</div>
<div class="a" style="left:1787px;top:713.9px;font-size:11px;color:#444">quantity</div>
<div class="a b" style="left:1772px;top:733.7px;font-size:12px;color:#7ccf5a">#</div>
<div class="a" style="left:1787px;top:734.7px;font-size:11px;color:#444">rating</div>
<div class="a b" style="left:1772px;top:754.4px;font-size:12px;color:#7ccf5a">#</div>
<div class="a" style="left:1787px;top:755.4px;font-size:11px;color:#444">shipping_cost</div>
<div class="a b" style="left:1772px;top:775.2px;font-size:12px;color:#7ccf5a">#</div>
<div class="a" style="left:1787px;top:776.2px;font-size:11px;color:#444">shipping_latitude</div>
<div class="a b" style="left:1772px;top:796.0px;font-size:12px;color:#7ccf5a">#</div>
<div class="a" style="left:1787px;top:797.0px;font-size:11px;color:#444">shipping_longitude</div>
<div class="a b" style="left:1772px;top:816.7px;font-size:12px;color:#7ccf5a">#</div>
<div class="a" style="left:1787px;top:817.7px;font-size:11px;color:#444">shipping_zip</div>
<div class="a b" style="left:1772px;top:837.5px;font-size:12px;color:#7ccf5a">#</div>
<div class="a" style="left:1787px;top:838.5px;font-size:11px;color:#444">total_days</div>
<div class="a" style="left:1762px;top:593px;width:5px;height:2px;background:#9ed88a"></div>
<div class="a" style="left:1762px;top:843px;width:5px;height:3px;border-top:1px solid #9ed88a;border-bottom:1px solid #9ed88a"></div>
<svg class="a" style="left:1858px;top:410px" width="16" height="20"><path d="M5 2 Q6 1 7 2 V9 L8 7 Q9 6 10 7 L10 9 Q11 8 12 9 L12 10 Q13 9 14 10 V14 Q14 17 11 18 H8 Q6 18 5 16 L2 12 Q2 10 4 11 L5 12 Z" fill="#fff" stroke="#333" stroke-width="1"/></svg>
</body></html>
